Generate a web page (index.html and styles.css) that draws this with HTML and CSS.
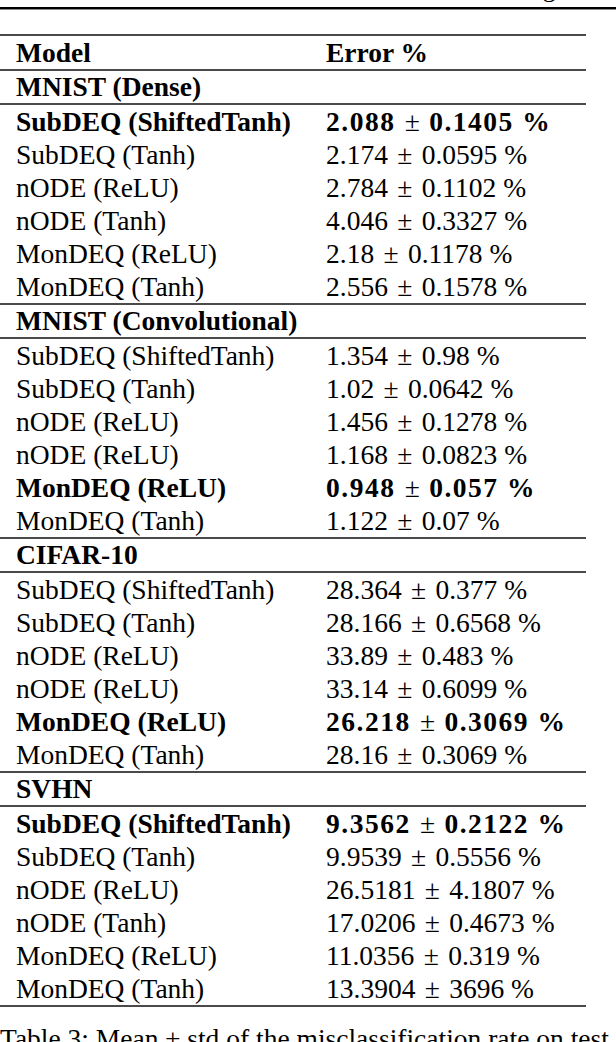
FILE: index.html
```html
<!DOCTYPE html>
<html>
<head>
<meta charset="utf-8">
<link rel="stylesheet" href="styles.css">
</head>
<body>
<div class="running"><span class="running-text">Subdifferential Neural Networks Training</span></div>
<table class="results">
  <colgroup><col class="c1"><col class="c2"></colgroup>
  <thead>
    <tr class="hdr"><th>Model</th><th>Error %</th></tr>
  </thead>
  <tbody>
    <tr class="sec"><th colspan="2">MNIST (Dense)</th></tr>
    <tr class="best"><td>SubDEQ (ShiftedTanh)</td><td>2.088<span class="pm">±</span>0.1405 %</td></tr>
    <tr><td>SubDEQ (Tanh)</td><td>2.174<span class="pm">±</span>0.0595 %</td></tr>
    <tr><td>nODE (ReLU)</td><td>2.784<span class="pm">±</span>0.1102 %</td></tr>
    <tr><td>nODE (Tanh)</td><td>4.046<span class="pm">±</span>0.3327 %</td></tr>
    <tr><td>MonDEQ (ReLU)</td><td>2.18<span class="pm">±</span>0.1178 %</td></tr>
    <tr class="end"><td>MonDEQ (Tanh)</td><td>2.556<span class="pm">±</span>0.1578 %</td></tr>
  </tbody>
  <tbody>
    <tr class="sec"><th colspan="2">MNIST (Convolutional)</th></tr>
    <tr><td>SubDEQ (ShiftedTanh)</td><td>1.354<span class="pm">±</span>0.98 %</td></tr>
    <tr><td>SubDEQ (Tanh)</td><td>1.02<span class="pm">±</span>0.0642 %</td></tr>
    <tr><td>nODE (ReLU)</td><td>1.456<span class="pm">±</span>0.1278 %</td></tr>
    <tr><td>nODE (ReLU)</td><td>1.168<span class="pm">±</span>0.0823 %</td></tr>
    <tr class="best"><td>MonDEQ (ReLU)</td><td>0.948<span class="pm">±</span>0.057 %</td></tr>
    <tr class="end"><td>MonDEQ (Tanh)</td><td>1.122<span class="pm">±</span>0.07 %</td></tr>
  </tbody>
  <tbody>
    <tr class="sec"><th colspan="2">CIFAR-10</th></tr>
    <tr><td>SubDEQ (ShiftedTanh)</td><td>28.364<span class="pm">±</span>0.377 %</td></tr>
    <tr><td>SubDEQ (Tanh)</td><td>28.166<span class="pm">±</span>0.6568 %</td></tr>
    <tr><td>nODE (ReLU)</td><td>33.89<span class="pm">±</span>0.483 %</td></tr>
    <tr><td>nODE (ReLU)</td><td>33.14<span class="pm">±</span>0.6099 %</td></tr>
    <tr class="best"><td>MonDEQ (ReLU)</td><td>26.218<span class="pm">±</span>0.3069 %</td></tr>
    <tr class="end"><td>MonDEQ (Tanh)</td><td>28.16<span class="pm">±</span>0.3069 %</td></tr>
  </tbody>
  <tbody>
    <tr class="sec"><th colspan="2">SVHN</th></tr>
    <tr class="best"><td>SubDEQ (ShiftedTanh)</td><td>9.3562<span class="pm">±</span>0.2122 %</td></tr>
    <tr><td>SubDEQ (Tanh)</td><td>9.9539<span class="pm">±</span>0.5556 %</td></tr>
    <tr><td>nODE (ReLU)</td><td>26.5181<span class="pm">±</span>4.1807 %</td></tr>
    <tr><td>nODE (Tanh)</td><td>17.0206<span class="pm">±</span>0.4673 %</td></tr>
    <tr><td>MonDEQ (ReLU)</td><td>11.0356<span class="pm">±</span>0.319 %</td></tr>
    <tr class="end"><td>MonDEQ (Tanh)</td><td>13.3904<span class="pm">±</span>3696 %</td></tr>
  </tbody>
</table>
<p class="caption">Table 3: Mean ± std of the misclassification rate on test set.</p>
</body>
</html>
```
FILE: styles.css
```css
html, body {
  margin: 0;
  padding: 0;
  background: #fff;
  color: #000;
  font-family: "Liberation Serif", "Times New Roman", serif;
}

.running {
  height: 7px;
  overflow: hidden;
  display: flex;
  justify-content: flex-end;
  align-items: flex-end;
  padding-right: 60px;
  border-bottom: 2px solid #000;
  box-shadow: 0 1px 0 #888;
}

.running-text {
  font-size: 27px;
  line-height: 1;
  margin-bottom: 6px;
}

.results {
  margin-top: 25px;
  width: 586px;
  border-collapse: collapse;
  font-size: 27.5px;
  border-top: 2px solid #4a4a4a;
  border-bottom: 2px solid #4a4a4a;
}

.c1 { width: 310px; }
.c2 { width: 276px; }

.results th,
.results td {
  height: 33px;
  padding: 0 0 0 16px;
  text-align: left;
  vertical-align: middle;
  line-height: 33px;
  white-space: nowrap;
}

.results th {
  font-weight: bold;
}

.sec th {
  height: 32px;
  line-height: 32px;
}

.hdr th,
.sec th,
.end td {
  border-bottom: 2px solid #4a4a4a;
}

.best td {
  font-weight: bold;
}

.best td + td {
  letter-spacing: 1.5px;
}

.pm {
  margin: 0 0.34em;
  font-weight: normal;
  letter-spacing: 0;
}

.caption {
  margin: 15px 0 0 0;
  font-size: 27.5px;
  line-height: 1.2;
}
```
